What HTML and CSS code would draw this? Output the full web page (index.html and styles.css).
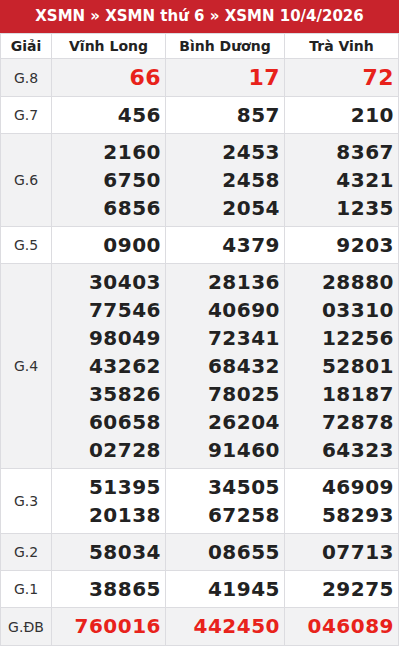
FILE: index.html
```html
<!DOCTYPE html>
<html lang="vi">
<head>
<meta charset="utf-8">
<title>XSMN 10/4/2026</title>
<link rel="stylesheet" href="styles.css">
</head>
<body>
<div class="box">
  <h2 class="title">XSMN » XSMN thứ 6 » XSMN 10/4/2026</h2>
  <table class="kq">
    <colgroup>
      <col class="c-prize"><col class="c-a"><col class="c-b"><col class="c-c">
    </colgroup>
    <thead>
      <tr><th>Giải</th><th>Vĩnh Long</th><th>Bình Dương</th><th>Trà Vinh</th></tr>
    </thead>
    <tbody>
      <tr class="alt"><td class="p">G.8</td><td class="n red big">66</td><td class="n red big">17</td><td class="n red big">72</td></tr>
      <tr><td class="p">G.7</td><td class="n">456</td><td class="n">857</td><td class="n">210</td></tr>
      <tr class="alt"><td class="p">G.6</td><td class="n">2160<br>6750<br>6856</td><td class="n">2453<br>2458<br>2054</td><td class="n">8367<br>4321<br>1235</td></tr>
      <tr><td class="p">G.5</td><td class="n">0900</td><td class="n">4379</td><td class="n">9203</td></tr>
      <tr class="alt"><td class="p">G.4</td><td class="n">30403<br>77546<br>98049<br>43262<br>35826<br>60658<br>02728</td><td class="n">28136<br>40690<br>72341<br>68432<br>78025<br>26204<br>91460</td><td class="n">28880<br>03310<br>12256<br>52801<br>18187<br>72878<br>64323</td></tr>
      <tr><td class="p">G.3</td><td class="n">51395<br>20138</td><td class="n">34505<br>67258</td><td class="n">46909<br>58293</td></tr>
      <tr class="alt"><td class="p">G.2</td><td class="n">58034</td><td class="n">08655</td><td class="n">07713</td></tr>
      <tr><td class="p">G.1</td><td class="n">38865</td><td class="n">41945</td><td class="n">29275</td></tr>
      <tr class="alt"><td class="p">G.ĐB</td><td class="n red db">760016</td><td class="n red db">442450</td><td class="n red db">046089</td></tr>
    </tbody>
  </table>
</div>
</body>
</html>
```

FILE: styles.css
```css
html, body {
  margin: 0;
  padding: 0;
  background: #ffffff;
  font-family: "DejaVu Sans", "Noto Sans", sans-serif;
  color: #222;
}
.box {
  width: 399px;
}
.title {
  margin: 0;
  height: 33px;
  line-height: 33px;
  background: #c8232c;
  color: #fff;
  font-size: 15px;
  font-weight: bold;
  text-align: center;
}
.kq {
  width: 399px;
  border-collapse: collapse;
  table-layout: fixed;
}
.c-prize { width: 51px; }
.c-a { width: 114px; }
.c-b { width: 119px; }
.c-c { width: 114px; }
.kq th, .kq td {
  border: 1px solid #dcdce0;
  padding: 0;
}
.kq th {
  height: 24px;
  font-size: 14px;
  font-weight: bold;
  color: #222;
  text-align: center;
  background: #fff;
}
.kq tr.alt td {
  background: #f2f2f3;
}
.p {
  font-size: 14px;
  color: #333;
  text-align: center;
}
.n {
  font-size: 20px;
  font-weight: bold;
  line-height: 28px;
  text-align: right;
  padding: 4px 4px 4px 0 !important;
  color: #222;
  letter-spacing: 0.5px;
}
.n.big {
  font-size: 22px;
  line-height: 29px;
}
.n.db {
  font-size: 20px;
  line-height: 29px;
}
.n.red {
  color: #e8221b;
}
```
